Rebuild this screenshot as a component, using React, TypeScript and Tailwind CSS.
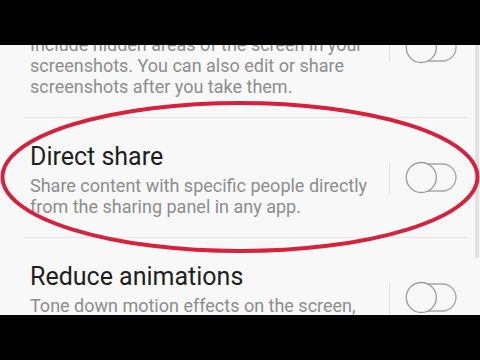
import React from "react";

interface SettingRow {
  title: string;
  lines: string[];
}

const rows: SettingRow[] = [
  {
    title: "Smart capture",
    lines: [
      "Include hidden areas of the screen in your",
      "screenshots. You can also edit or share",
      "screenshots after you take them."
    ]
  },
  {
    title: "Direct share",
    lines: ["Share content with specific people directly", "from the sharing panel in any app."]
  },
  {
    title: "Reduce animations",
    lines: ["Tone down motion effects on the screen,", "such as when apps are opened or closed."]
  }
];

export default function App(): React.ReactElement {
  return (
    <div className="relative flex h-[360px] w-[480px] flex-col bg-black font-['Roboto',sans-serif]">
      <div className="h-[45px] bg-black" />

      <div className="flex h-[270px] overflow-hidden bg-[#f8f8f8]">
        <div className="flex-1">
          {rows.map((row, index) => (
            <div className={index === 0 ? "-mt-[68px]" : ""} key={row.title}>
              {index > 0 ? <div className="ml-[24px] mr-[8px] h-px bg-[#e4e4e4]" /> : null}
              <Row row={row} />
            </div>
          ))}
        </div>
        <div className="w-[5px] pr-px">
          <div className="h-[213px] bg-[#e2e2e2]" />
        </div>
      </div>

      <div className="h-[45px] bg-black" />

      <svg className="pointer-events-none absolute inset-0" height="360" viewBox="0 0 480 360" width="480">
        <ellipse cx="240" cy="177" fill="none" rx="237.5" ry="74" stroke="#d6213c" strokeWidth="4" />
      </svg>
    </div>
  );
}

function Row({ row }: { row: SettingRow }): React.ReactElement {
  return (
    <div className="ml-[24px] mr-[8px] flex items-center">
      <div className="flex-1 pb-[20px] pl-[6px] pt-[24px]">
        <p className="text-[25px] leading-[30px] text-[#1e1e1e]">{row.title}</p>
        <div className="mt-[3px] text-[18px] leading-[21px] text-[#8d8d8d]">
          {row.lines.map((line) => (
            <p className="whitespace-nowrap" key={line}>
              {line}
            </p>
          ))}
        </div>
      </div>
      <div className="h-[32px] w-px bg-[#e2e2e2]" />
      <Toggle />
    </div>
  );
}

function Toggle(): React.ReactElement {
  return (
    <svg className="ml-[15px] mr-[8px]" height="33" viewBox="0 0 54 33" width="54">
      <rect fill="none" height="27" rx="13.5" stroke="#a6a6a6" strokeWidth="1.3" width="46" x="5" y="3" />
      <circle cx="16.3" cy="16.5" fill="#f8f8f8" r="15" stroke="#9a9a9a" strokeWidth="1.3" />
    </svg>
  );
}
